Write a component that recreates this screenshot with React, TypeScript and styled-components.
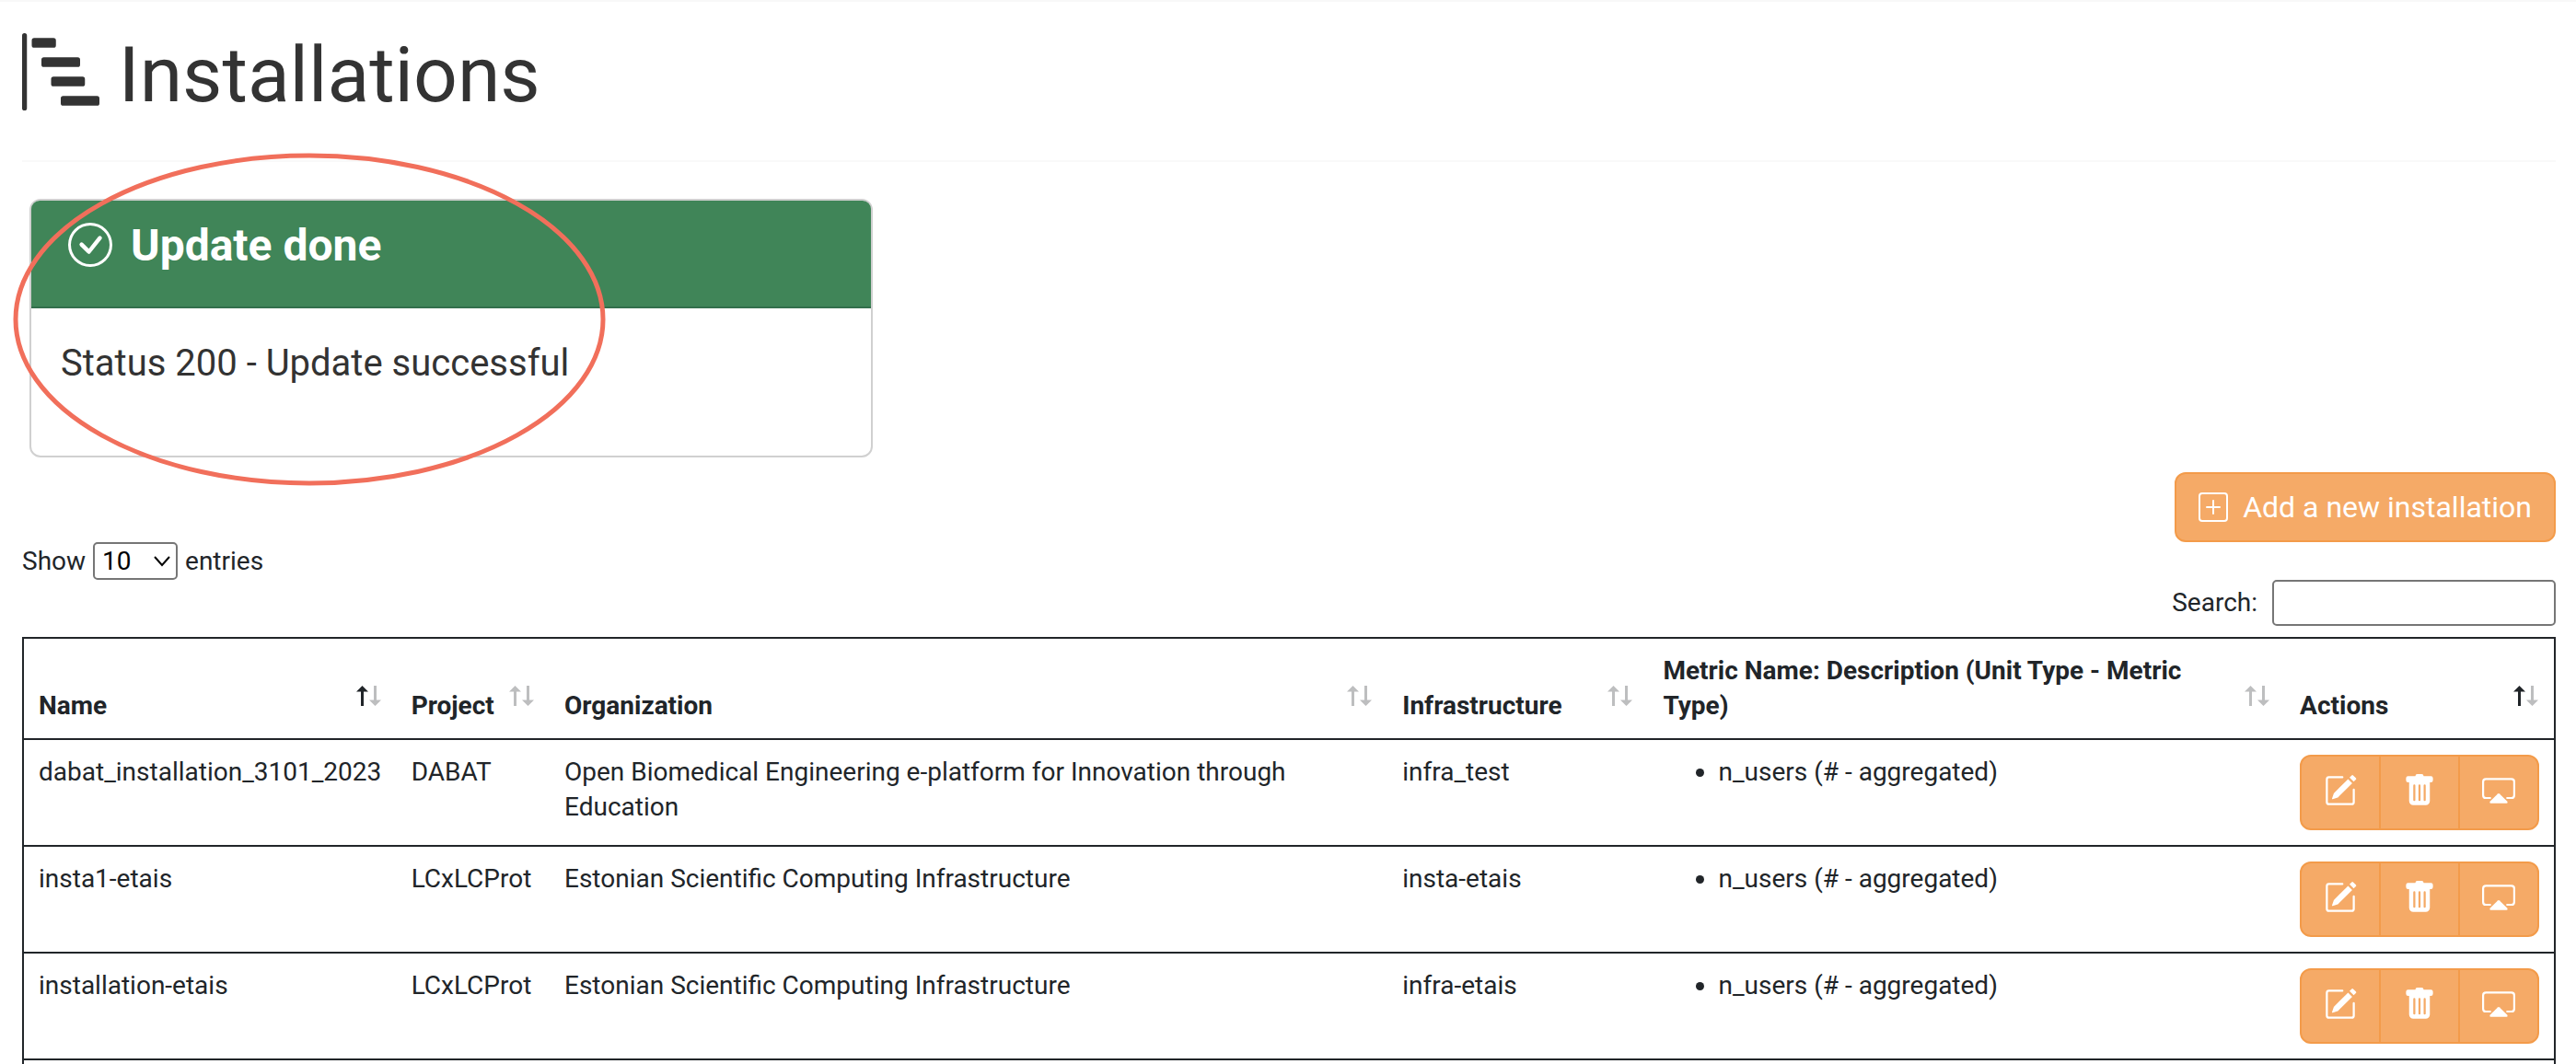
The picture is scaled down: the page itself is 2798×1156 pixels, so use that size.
import React from 'react';
import styled, { createGlobalStyle } from 'styled-components';
import { BsBarChartSteps, BsCheckCircle, BsPlusSquare, BsPencilSquare, BsTrashFill } from 'react-icons/bs';

const Global = createGlobalStyle`
  * { box-sizing: border-box; }
  body {
    margin: 0;
    background: #fff;
    color: #212529;
    font: 28px/38px Roboto, sans-serif;
  }
`;

const Page = styled.main`
  max-height: 100vh;
  overflow: hidden;
  border-top: 2px solid #f8f8f8;
  padding: 0 22px 0 24px;
`;

const PageHeader = styled.header`
  border-bottom: 2px solid #f9f9f9;
  padding-bottom: 44px;
`;

const Title = styled.h1`
  margin: 0;
  padding-top: 32px;
  color: #333;
  font-size: 84px;
  font-weight: 400;
  line-height: 96px;
  svg { vertical-align: -10px; }
`;

const Alert = styled.section`
  position: relative;
  width: 916px;
  max-width: 100%;
  margin: 40px 0 0 8px;
  border: 2px solid #d0d0d0;
  border-radius: 12px;
  color: #333;
`;

const AlertHead = styled.h2`
  display: flex;
  align-items: flex-start;
  gap: 20px;
  height: 117px;
  margin: 0;
  padding: 24px 40px;
  border-bottom: 2px solid #336f4c;
  border-radius: 9px 9px 0 0;
  background: #408558;
  color: #fff;
  font-size: 48px;
  font-weight: 700;
  line-height: 50px;
`;

const AlertBody = styled.p`
  margin: 0;
  padding: 36px 32px 76px;
  font-size: 40px;
  line-height: 48px;
`;

const Ellipse = styled.svg`
  position: absolute;
  left: -20px;
  top: -53px;
  width: 645px;
  height: 364px;
  pointer-events: none;
`;

const TopActions = styled.div`
  display: flex;
  justify-content: flex-end;
  margin-top: 16px;
`;

const AddButton = styled.button`
  display: flex;
  align-items: center;
  gap: 16px;
  height: 76px;
  padding: 0 24px;
  border: 2px solid #f39b4a;
  border-radius: 12px;
  background: #f5aa67;
  color: #fff;
  font: 32px/48px Roboto, sans-serif;
`;

const Filters = styled.div`
  display: flex;
  justify-content: space-between;
  align-items: flex-start;
  padding-bottom: 12px;
`;

const LengthLabel = styled.label`
  display: flex;
  align-items: center;
  gap: 8px;
`;

const SelectBox = styled.span`
  position: relative;
  display: flex;
  align-items: center;
`;

const LengthSelect = styled.select`
  appearance: none;
  width: 92px;
  height: 41px;
  padding: 0 8px;
  border: 2px solid #767676;
  border-radius: 5px;
  background: #fff;
  color: #000;
  font: inherit;
`;

const Chevron = styled.svg`
  position: absolute;
  right: 8px;
  pointer-events: none;
`;

const SearchLabel = styled.label`
  display: flex;
  align-items: center;
  gap: 16px;
  margin-top: 41px;
`;

const SearchInput = styled.input`
  width: 308px;
  height: 50px;
  padding: 0 8px;
  border: 2px solid #767676;
  border-radius: 5px;
  background: #fff;
  font: inherit;
`;

const Table = styled.table`
  width: 100%;
  table-layout: fixed;
  border: 2px solid #212529;
  border-collapse: collapse;
`;

const Row = styled.tr`
  height: 116px;
  border-top: 2px solid #212529;
  vertical-align: top;
`;

const Cell = styled.td`
  padding: 16px;
`;

const HeadCell = styled.th`
  padding: 16px;
  text-align: left;
  vertical-align: bottom;
  font-weight: 700;
`;

const HeadInner = styled.div`
  display: flex;
  align-items: flex-end;
  justify-content: space-between;
  gap: 8px;
`;

const SortIcon = styled.svg`
  flex: none;
  margin-bottom: 18px;
`;

const MetricList = styled.ul`
  margin: 0;
  padding-left: 60px;
`;

const Group = styled.div`
  display: flex;
`;

const ActionButton = styled.button`
  display: flex;
  justify-content: center;
  flex: 1;
  height: 82px;
  padding: 19px 0 0;
  border: 2px solid #f39b4a;
  background: #f5aa67;
  color: #fff;
  & + & { margin-left: -2px; }
  &:first-child { border-radius: 12px 0 0 12px; }
  &:last-child { border-radius: 0 12px 12px 0; }
`;

function SortArrows({ sorted }: { sorted: boolean }) {
  const up = sorted ? '#212529' : '#bdbebf';
  return (
    <SortIcon width="28" height="24" viewBox="0 0 28 24" aria-hidden="true">
      <path d="M6.5 1 L13 7.5 H8 V23 H5 V7.5 H0 Z" fill={up} />
      <path d="M20.5 23 L27 16.5 H22 V1 H19 V16.5 H14 Z" fill="#bdbebf" />
    </SortIcon>
  );
}

function ScreenIcon() {
  return (
    <svg width="36" height="36" viewBox="0 0 36 36" aria-hidden="true">
      <path d="M9.6 26 H4.2 Q1.1 26 1.1 22.9 V8.5 Q1.1 5.4 4.2 5.4 H31.8 Q34.9 5.4 34.9 8.5 V22.9 Q34.9 26 31.8 26 H26.4" fill="none" stroke="currentColor" strokeWidth="2.2" />
      <path d="M17 21.4 Q18 20.4 19 21.4 L27.4 29.8 Q28.4 31.6 26.6 31.7 H9.4 Q7.6 31.6 8.6 29.8 Z" fill="currentColor" />
    </svg>
  );
}

const columns = [
  { title: 'Name', width: '14.75%', sorted: true },
  { title: 'Project', width: '6.05%', sorted: false },
  { title: 'Organization', width: '33.1%', sorted: false },
  { title: 'Infrastructure', width: '10.3%', sorted: false },
  { title: 'Metric Name: Description (Unit Type - Metric Type)', width: '25.15%', sorted: false },
  { title: 'Actions', width: '10.65%', sorted: true },
];

const rows = [
  ['dabat_installation_3101_2023', 'DABAT', 'Open Biomedical Engineering e-platform for Innovation through Education', 'infra_test'],
  ['insta1-etais', 'LCxLCProt', 'Estonian Scientific Computing Infrastructure', 'insta-etais'],
  ['installation-etais', 'LCxLCProt', 'Estonian Scientific Computing Infrastructure', 'infra-etais'],
];

export default function App() {
  return (
    <Page>
      <Global />
      <PageHeader>
        <Title><BsBarChartSteps size={84} /> Installations</Title>
      </PageHeader>
      <Alert role="status">
        <AlertHead><BsCheckCircle size={48} />Update done</AlertHead>
        <AlertBody>Status 200 - Update successful</AlertBody>
        <Ellipse viewBox="0 0 645 364" aria-hidden="true">
          <ellipse cx="322" cy="182" rx="319" ry="178" fill="none" stroke="#f16f5b" strokeWidth="5" />
        </Ellipse>
      </Alert>
      <TopActions>
        <AddButton type="button"><BsPlusSquare size={32} />Add a new installation</AddButton>
      </TopActions>
      <Filters>
        <LengthLabel>
          Show
          <SelectBox>
            <LengthSelect defaultValue="10">
              <option>10</option>
              <option>25</option>
              <option>50</option>
              <option>100</option>
            </LengthSelect>
            <Chevron width="18" height="12" viewBox="0 0 18 12" aria-hidden="true">
              <path d="M1 1 L9 10 L17 1" fill="none" stroke="#000" strokeWidth="2" />
            </Chevron>
          </SelectBox>
          entries
        </LengthLabel>
        <SearchLabel>Search:<SearchInput type="search" /></SearchLabel>
      </Filters>
      <Table>
        <colgroup>
          {columns.map((c) => <col key={c.title} width={c.width} />)}
        </colgroup>
        <thead>
          <tr>
            {columns.map((c) => (
              <HeadCell key={c.title} scope="col">
                <HeadInner>{c.title}<SortArrows sorted={c.sorted} /></HeadInner>
              </HeadCell>
            ))}
          </tr>
        </thead>
        <tbody>
          {rows.map((row) => (
            <Row key={row[0]}>
              {row.map((text) => <Cell key={text}>{text}</Cell>)}
              <Cell><MetricList><li>n_users (# - aggregated)</li></MetricList></Cell>
              <Cell>
                <Group role="group" aria-label={row[0]}>
                  <ActionButton type="button" aria-label="Edit"><BsPencilSquare size={36} /></ActionButton>
                  <ActionButton type="button" aria-label="Delete"><BsTrashFill size={36} /></ActionButton>
                  <ActionButton type="button" aria-label="Display"><ScreenIcon /></ActionButton>
                </Group>
              </Cell>
            </Row>
          ))}
          <Row><Cell colSpan={6} /></Row>
        </tbody>
      </Table>
    </Page>
  );
}
